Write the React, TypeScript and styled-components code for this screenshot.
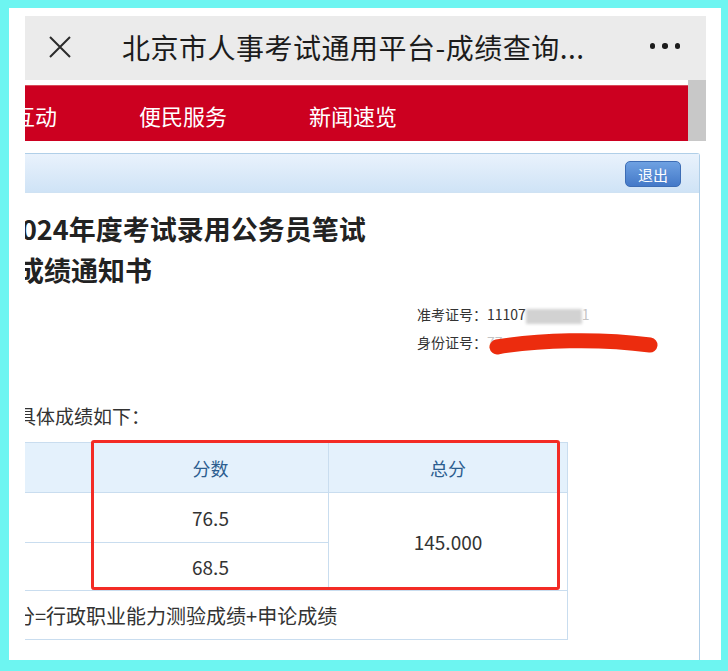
import React from 'react'
import styled, { createGlobalStyle } from 'styled-components'

const GlobalStyle = createGlobalStyle`
  html, body {
    margin: 0;
    padding: 0;
    background: #6df5f1;
  }
  body {
    font-family: "Noto Sans CJK SC", "Noto Sans", sans-serif;
  }
`

const App: React.FC = () => {
  return (
    <>
      <GlobalStyle />
      <Frame>
        <Screen>
          <TopBar>
            <CloseIcon viewBox="0 0 24 24">
              <path d="M2 2 L22 22 M22 2 L2 22" />
            </CloseIcon>
            <PageTitle>北京市人事考试通用平台-成绩查询...</PageTitle>
            <MoreDots>
              <Dot />
              <Dot />
              <Dot />
            </MoreDots>
          </TopBar>
          <NavRow>
            <NavBar>
              <NavItem first>互动</NavItem>
              <NavItem>便民服务</NavItem>
              <NavItem>新闻速览</NavItem>
            </NavBar>
            <ScrollThumb />
          </NavRow>
          <Panel>
            <PanelHead>
              <LogoutButton>退出</LogoutButton>
            </PanelHead>
            <PanelBody>
              <NoticeTitle>
                2024年度考试录用公务员笔试
                <br />
                成绩通知书
              </NoticeTitle>
              <Info>
                <InfoLine>
                  准考证号：11107<Blurred />
                  <Faint>1</Faint>
                </InfoLine>
                <InfoLine>
                  身份证号：<Faint>77</Faint>
                  <Faint style={{ marginLeft: 118 }}>050</Faint>
                  <Scribble viewBox="0 0 172 28">
                    <path d="M9 17 C 50 10, 110 8, 162 15" />
                  </Scribble>
                </InfoLine>
              </Info>
              <SubTitle>具体成绩如下：</SubTitle>
              <TableWrap>
                <ScoreTable>
                  <colgroup>
                    <col style={{ width: 135 }} />
                    <col style={{ width: 236 }} />
                    <col style={{ width: 239 }} />
                  </colgroup>
                  <thead>
                    <tr>
                      <HeadCell />
                      <HeadCell>分数</HeadCell>
                      <HeadCell>总分</HeadCell>
                    </tr>
                  </thead>
                  <tbody>
                    <tr>
                      <Cell rowHeight={49} />
                      <Cell rowHeight={49}>76.5</Cell>
                      <Cell rowHeight={96} rowSpan={2}>
                        145.000
                      </Cell>
                    </tr>
                    <tr>
                      <Cell rowHeight={47} />
                      <Cell rowHeight={47}>68.5</Cell>
                    </tr>
                    <tr>
                      <NoteCell colSpan={3}>总分=行政职业能力测验成绩+申论成绩</NoteCell>
                    </tr>
                  </tbody>
                </ScoreTable>
                <Highlight />
              </TableWrap>
            </PanelBody>
          </Panel>
        </Screen>
      </Frame>
    </>
  )
}

export default App

const Frame = styled.div`
  box-sizing: border-box;
  margin: 8px 7px 0 9px;
  width: 712px;
  height: 652px;
  background: #ffffff;
  padding: 8px 15px 0 16px;
`

const Screen = styled.div`
  height: 644px;
  overflow: hidden;
  display: flex;
  flex-direction: column;
  background: #ffffff;
`

const TopBar = styled.div`
  flex: none;
  height: 64px;
  background: #ebebeb;
  display: flex;
  align-items: center;
  padding: 0 26px 0 23px;
`

const CloseIcon = styled.svg`
  width: 24px;
  height: 24px;
  flex: none;
  margin-top: -3px;
  fill: none;
  stroke: #2b2b2b;
  stroke-width: 2;
`

const PageTitle = styled.div`
  margin-left: 50px;
  font-size: 28px;
  letter-spacing: 0.5px;
  color: #1c1c1c;
  white-space: nowrap;
  margin-top: -2px;
`

const MoreDots = styled.div`
  margin-left: auto;
  display: flex;
  gap: 7px;
  margin-top: -4px;
`

const Dot = styled.span`
  width: 5.5px;
  height: 5.5px;
  border-radius: 50%;
  background: #1c1c1c;
`

const NavRow = styled.div`
  flex: none;
  height: 61px;
  display: flex;
`

const NavBar = styled.div`
  flex: 1;
  margin-top: 5px;
  background: #cc0020;
  border-top: 1px solid #d84a5a;
  display: flex;
  align-items: center;
  gap: 82px;
  overflow: hidden;
  padding-top: 3px;
`

const NavItem = styled.span<{ first?: boolean }>`
  color: #ffffff;
  font-size: 22px;
  white-space: nowrap;
  margin-left: ${p => (p.first ? '-12px' : '0')};
`

const ScrollThumb = styled.div`
  width: 18px;
  background: #c8c8c8;
`

const Panel = styled.div`
  flex: 1;
  margin: 12px 6px 0 -30px;
  border: 1px solid #b0cfe8;
  border-bottom: none;
  border-radius: 3px 3px 0 0;
  display: flex;
  flex-direction: column;
`

const PanelHead = styled.div`
  height: 39px;
  box-sizing: border-box;
  background: linear-gradient(#e9f2fc, #cfe3f6);
  border-bottom: 1px solid #cfe2f3;
  display: flex;
  justify-content: flex-end;
  align-items: center;
  padding: 2px 18px 0 0;
`

const LogoutButton = styled.button`
  width: 56px;
  height: 26px;
  border: 1px solid #3d6db5;
  border-radius: 5px;
  background: linear-gradient(#6ea1e2, #4479c8);
  color: #ffffff;
  font-family: "Noto Sans CJK SC", sans-serif;
  font-size: 15px;
  padding: 0;
  cursor: pointer;
`

const PanelBody = styled.div`
  padding: 15px 0 0 21px;
`

const NoticeTitle = styled.div`
  font-size: 27px;
  font-weight: bold;
  line-height: 41px;
  color: #222222;
  text-indent: -12px;
  white-space: nowrap;
`

const Info = styled.div`
  margin-top: 10px;
  padding-left: 400px;
  font-size: 14px;
  line-height: 28px;
  color: #333333;
`

const InfoLine = styled.div`
  position: relative;
  white-space: nowrap;
`

const Blurred = styled.span`
  display: inline-block;
  width: 56px;
  height: 15px;
  background: #d2d2d2;
  filter: blur(1.5px);
  vertical-align: middle;
`

const Faint = styled.span`
  color: #c4c4c4;
`

const Scribble = styled.svg`
  position: absolute;
  left: 71px;
  top: 2px;
  width: 172px;
  height: 28px;
  fill: none;
  stroke: #ec2c0e;
  stroke-width: 15;
  stroke-linecap: round;
`

const SubTitle = styled.div`
  margin-top: 47px;
  font-size: 19px;
  line-height: 26px;
  color: #333333;
`

const TableWrap = styled.div`
  position: relative;
  margin: 13px 0 0 -60px;
  width: 610px;
`

const ScoreTable = styled.table`
  width: 610px;
  table-layout: fixed;
  border-collapse: collapse;
`

const HeadCell = styled.th`
  height: 49px;
  padding: 0;
  background: #e4f1fc;
  border: 1px solid #c9ddef;
  color: #2c5d8f;
  font-size: 18px;
  font-weight: normal;
  text-align: center;
`

const Cell = styled.td<{ rowHeight: number }>`
  height: ${p => p.rowHeight}px;
  padding: 0;
  border: 1px solid #c9ddef;
  color: #333333;
  font-size: 19px;
  text-align: center;
`

const NoteCell = styled.td`
  height: 48px;
  padding: 0 0 0 37px;
  border: 1px solid #c9ddef;
  color: #333333;
  font-size: 20px;
  white-space: nowrap;
`

const Highlight = styled.div`
  position: absolute;
  left: 134px;
  top: -2px;
  width: 469px;
  height: 150px;
  box-sizing: border-box;
  border: 3px solid #f32b25;
  border-radius: 3px;
  pointer-events: none;
`
